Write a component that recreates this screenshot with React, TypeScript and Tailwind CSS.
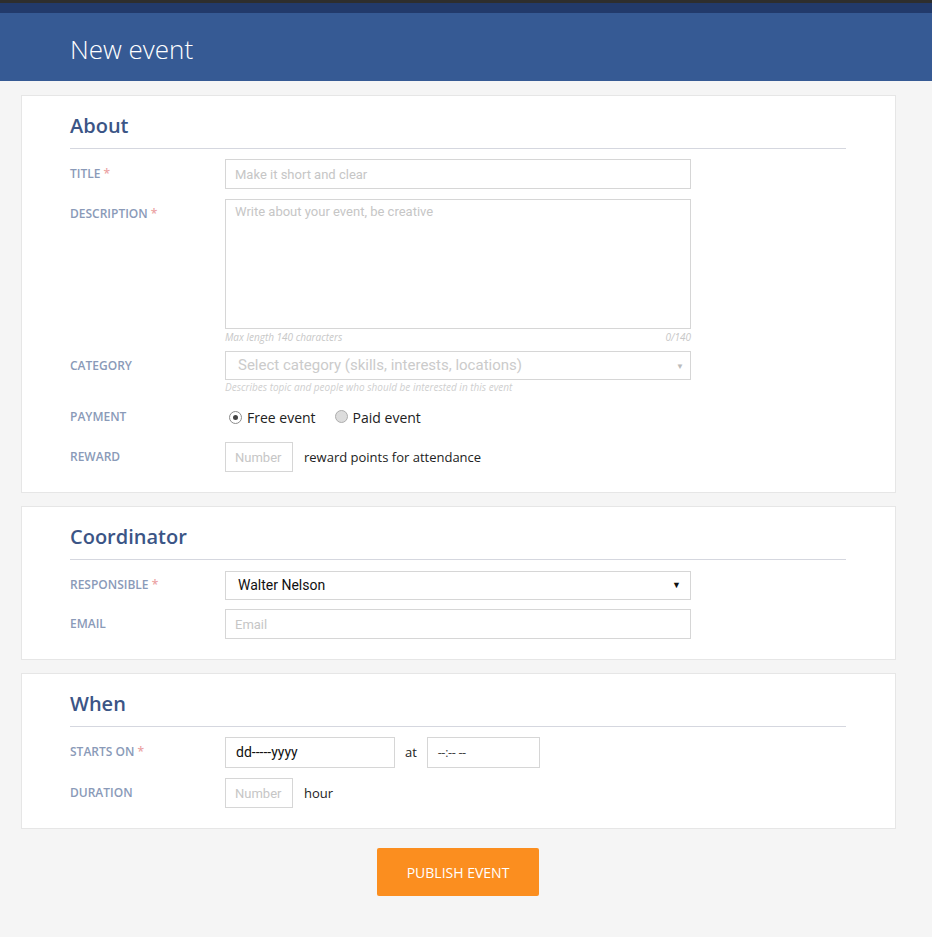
import React from 'react'

const sans = "font-['Open_Sans',sans-serif]"
const roboto = "font-['Roboto',sans-serif]"

function Label({ text, required }: { text: string; required?: boolean }) {
  return (
    <div className={`w-[155px] shrink-0 h-[30px] leading-[30px] text-[12px] font-semibold uppercase text-[#8a9ab8] ${sans}`}>
      {text}
      {required && <span className="text-[#eba3a3]"> *</span>}
    </div>
  )
}

function Card({ title, children }: { title: string; children: React.ReactNode }) {
  return (
    <div className="bg-white border border-[#e6e6e6] pl-[48px] pr-[49px] pt-[16px] pb-[20px]">
      <h2 className={`h-[28px] leading-[28px] text-[20px] font-semibold text-[#3b5586] ${sans}`}>{title}</h2>
      <div className="mt-[8px] border-b border-[#d5d7df]" />
      {children}
    </div>
  )
}

const inputCls = `border border-[#d6d6d6] bg-white px-[9px] text-[13px] text-[#333] outline-none placeholder:text-[#c6c6c6] ${roboto}`

function Radio({ checked }: { checked?: boolean }) {
  return (
    <span
      className={`inline-flex items-center justify-center w-[13px] h-[13px] rounded-full border ${
        checked ? 'border-[#8c8c8c] bg-white' : 'border-[#adadad] bg-[#dcdcdc]'
      }`}
    >
      {checked && <span className="w-[5px] h-[5px] rounded-full bg-[#444]" />}
    </span>
  )
}

export default function App() {
  return (
    <div className="min-h-[937px] bg-[#f5f5f5] pb-[40px]">
      <div className="h-[3px] bg-[#2e2e2e]" />
      <div className="h-[10px] bg-[#223a6b]" />
      <header className="h-[68px] bg-[#365a94] flex items-center pl-[70px] pt-[4px]">
        <h1 className={`text-[26px] font-light text-white ${sans}`}>New event</h1>
      </header>

      <div className="px-[21px] pr-[36px] mt-[14px] flex flex-col gap-[13px]">
        <Card title="About">
          <div className="mt-[10px] flex items-start">
            <Label text="Title" required />
            <input className={`${inputCls} w-[466px] h-[30px]`} placeholder="Make it short and clear" />
          </div>

          <div className="mt-[10px] flex items-start">
            <Label text="Description" required />
            <div className="w-[466px]">
              <textarea
                className={`${inputCls} block w-full h-[130px] py-[2px] resize-none`}
                placeholder="Write about your event, be creative"
              />
              <div className={`mt-[2px] h-[12px] leading-[12px] flex justify-between text-[10px] italic text-[#c8c8c8] ${sans}`}>
                <span>Max length 140 characters</span>
                <span>0/140</span>
              </div>
            </div>
          </div>

          <div className="mt-[8px] flex items-start">
            <Label text="Category" />
            <div className="w-[466px]">
              <div className="h-[29px] border border-[#d6d6d6] flex items-center justify-between pl-[12px] pr-[6px]">
                <span className={`text-[15px] text-[#cbcbcb] ${roboto}`}>Select category (skills, interests, locations)</span>
                <span className="text-[8px] text-[#bbb]">▼</span>
              </div>
              <div className={`mt-[1px] h-[12px] leading-[12px] text-[10px] italic text-[#cfcfcf] ${sans}`}>
                Describes topic and people who should be interested in this event
              </div>
            </div>
          </div>

          <div className="mt-[9px] flex items-start">
            <Label text="Payment" />
            <div className={`h-[30px] flex items-center pl-[4px] text-[14px] text-[#222] ${sans}`}>
              <Radio checked />
              <span className="ml-[5px]">Free event</span>
              <span className="ml-[19px]"><Radio /></span>
              <span className="ml-[5px]">Paid event</span>
            </div>
          </div>

          <div className="mt-[10px] flex items-start">
            <Label text="Reward" />
            <input className={`${inputCls} w-[68px] h-[30px]`} placeholder="Number" />
            <span className={`ml-[11px] h-[30px] leading-[30px] text-[13px] text-[#222] ${sans}`}>reward points for attendance</span>
          </div>
        </Card>

        <Card title="Coordinator">
          <div className="mt-[10px] flex items-center">
            <Label text="Responsible" required />
            <div className="w-[466px] h-[29px] border border-[#d6d6d6] flex items-center justify-between pl-[12px] pr-[9px]">
              <span className={`text-[14px] text-[#111] ${roboto}`}>Walter Nelson</span>
              <span className="text-[9px] text-[#111]">▼</span>
            </div>
          </div>
          <div className="mt-[9px] flex items-start">
            <Label text="Email" />
            <input className={`${inputCls} w-[466px] h-[30px]`} placeholder="Email" />
          </div>
        </Card>

        <Card title="When">
          <div className="mt-[10px] flex items-start">
            <Label text="Starts on" required />
            <div className={`w-[170px] h-[31px] border border-[#d6d6d6] pl-[10px] flex items-center text-[14px] text-[#111] ${roboto}`}>
              dd-----yyyy
            </div>
            <span className={`ml-[10px] w-[22px] h-[31px] leading-[31px] text-[13px] text-[#222] ${sans}`}>at</span>
            <div className={`w-[113px] h-[31px] border border-[#d6d6d6] pl-[10px] flex items-center text-[13px] text-[#444] ${roboto}`}>
              --:-- --
            </div>
          </div>
          <div className="mt-[10px] flex items-start">
            <Label text="Duration" />
            <input className={`${inputCls} w-[68px] h-[30px]`} placeholder="Number" />
            <span className={`ml-[11px] h-[30px] leading-[30px] text-[13px] text-[#222] ${sans}`}>hour</span>
          </div>
        </Card>
      </div>

      <div className="mt-[19px] flex justify-center pr-[16px]">
        <button className={`w-[162px] h-[48px] rounded-[2px] bg-[#fb8e1f] text-[14px] text-white ${sans}`}>
          PUBLISH EVENT
        </button>
      </div>
    </div>
  )
}
